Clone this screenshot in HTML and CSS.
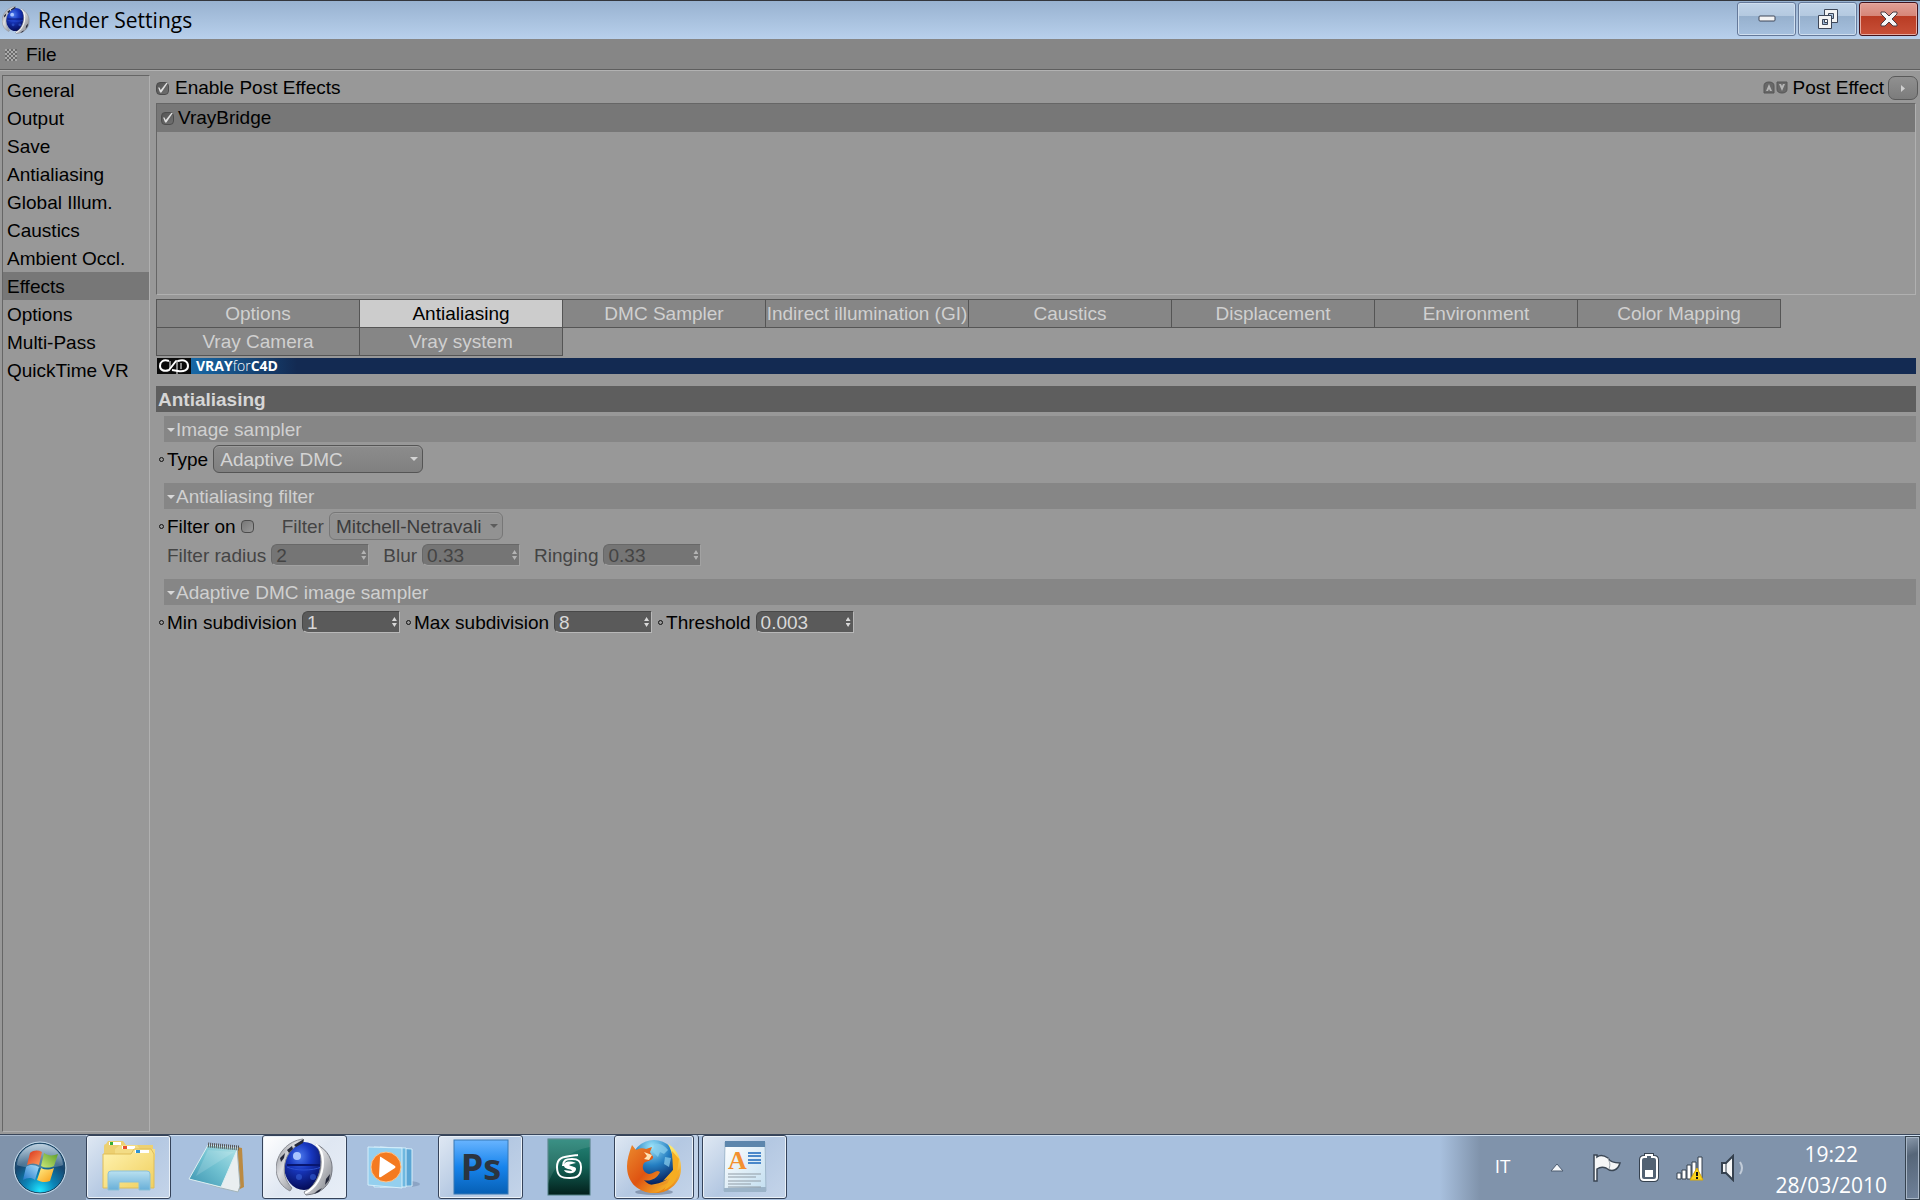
FILE: index.html
```html
<!DOCTYPE html>
<html lang="en">
<head>
    <meta charset="UTF-8">
    <meta name="viewport" content="width=device-width, initial-scale=1.0">
    <title>Render Settings</title>
    <link rel="stylesheet" href="styles.css">
</head>
<body>
    <!-- Shared gradients and shapes -->
    <svg class="defs" width="0" height="0" aria-hidden="true">
        <defs>
            <radialGradient id="ball" cx="40%" cy="30%" r="70%">
                <stop offset="0" stop-color="#4a78ec"/>
                <stop offset=".4" stop-color="#1838c0"/>
                <stop offset="1" stop-color="#040c58"/>
            </radialGradient>
            <linearGradient id="silver" x1="0" y1="0" x2="1" y2="1">
                <stop offset="0" stop-color="#7c7f86"/>
                <stop offset=".4" stop-color="#dcdde0"/>
                <stop offset="1" stop-color="#75787f"/>
            </linearGradient>
            <symbol id="c4d" viewBox="0 0 58 58">
                <ellipse cx="28" cy="28" rx="20" ry="24" fill="url(#ball)"/>
                <path d="M11 27H45" stroke="#081670" stroke-width="2"/>
                <path d="M11 29C19 33 37 33 45 29" fill="none" stroke="#2c50d0" stroke-width="1"/>
                <circle cx="21" cy="18" r="4" fill="#a9c4ff"/>
                <circle cx="23" cy="39" r="3" fill="#3560d8" opacity=".6"/>
                <circle cx="37" cy="39" r="3" fill="#3560d8" opacity=".6"/>
                <path d="M27 1C12 3 0 15 0 32C1 42 6 49 14 53L16 50C9 43 7 34 9 25C11 16 16 9 27 4Z" fill="url(#silver)" stroke="#8a8d94"/>
                <path d="M18 7L28 1L27 5L20 9Z M11 12L16 8L17 11L13 15Z M4 20L9 15L8 20L5 24Z" fill="#24283a"/>
                <path d="M40 6C52 12 57 22 56 33C55 46 46 56 30 57L28 54C42 48 51 24 40 6Z" fill="url(#silver)" stroke="#777a82"/>
                <path d="M29 55C40 50 47 38 47 24C47 17 44 10 40 6" fill="none" stroke="#fff" stroke-width="2"/>
                <path d="M50 41L54 36L53 42L49 47Z M41 53L46 50L43 54L38 56Z" fill="#24283a"/>
            </symbol>
        </defs>
    </svg>

    <header class="titlebar">
        <svg class="app-icon" viewBox="0 0 58 58"><use href="#c4d"/></svg>
        <h1>Render Settings</h1>
        <div class="window-buttons">
            <button class="win-btn" aria-label="Minimize">
                <svg width="18" height="8"><rect x="1" y="1" width="16" height="5" rx="1" fill="#f4f4f4" stroke="#3e4758"/></svg>
            </button>
            <button class="win-btn" aria-label="Restore">
                <svg width="22" height="22" fill="#f4f4f4" stroke="#3e4758">
                    <path fill-rule="evenodd" d="M7.500 1.500H20.500V14.500H7.500Z M11.500 5.500H16.500V10.500H11.500Z"/>
                    <path fill-rule="evenodd" d="M1.500 7.500H14.500V20.500H1.500Z M5.500 11.500H10.500V16.500H5.500Z"/>
                </svg>
            </button>
            <button class="win-btn close" aria-label="Close">
                <svg width="20" height="18"><path d="M2 2H6L10 6L14 2H18V4L13 9L18 14V16H14L10 12L6 16H2V14L7 9L2 4Z" fill="#f6f6f6" stroke="#4a3c44"/></svg>
            </button>
        </div>
    </header>

    <nav class="menubar">
        <span class="grip"></span>
        <button class="menu">File</button>
    </nav>

    <div class="workspace">
        <nav class="sidebar">
            <button>General</button>
            <button>Output</button>
            <button>Save</button>
            <button>Antialiasing</button>
            <button>Global Illum.</button>
            <button>Caustics</button>
            <button>Ambient Occl.</button>
            <button class="active">Effects</button>
            <button>Options</button>
            <button>Multi-Pass</button>
            <button>QuickTime VR</button>
        </nav>

        <main class="content">
            <div class="toolbar">
                <label class="check"><input type="checkbox" checked>Enable Post Effects</label>
                <div class="post-effect">
                    <svg width="25" height="14" viewBox="0 0 25 14">
                        <path d="M1 12V5Q1 1 6 1Q11 1 11 5V12Z" fill="#686868" stroke="#565656"/>
                        <path d="M6 3L9 10H7L6 8L5 10H3Z" fill="#b4b4b4"/>
                        <path d="M14 1V8Q14 12 19 12Q24 12 24 8V1Z" fill="#686868" stroke="#565656"/>
                        <path d="M19 10L16 3H18L19 5L20 3H22Z" fill="#b4b4b4"/>
                    </svg>
                    <span>Post Effect</span>
                    <button class="popup" aria-label="Post effect menu">
                        <svg width="4" height="7"><path d="M0 0L4 3.500L0 7Z" fill="#d0d0d0"/></svg>
                    </button>
                </div>
            </div>

            <div class="effect-list">
                <label class="check selected"><input type="checkbox" checked>VrayBridge</label>
            </div>

            <div class="tabs">
                <button>Options</button>
                <button class="active">Antialiasing</button>
                <button>DMC Sampler</button>
                <button>Indirect illumination (GI)</button>
                <button>Caustics</button>
                <button>Displacement</button>
                <button>Environment</button>
                <button>Color Mapping</button>
                <button>Vray Camera</button>
                <button>Vray system</button>
            </div>

            <div class="banner">
                <svg width="34" height="16" viewBox="0 0 34 16">
                    <rect width="34" height="16" fill="#0b0b0b"/>
                    <g fill="none" stroke="#fff" stroke-width="2">
                        <path d="M12 3C6 1 3 4 3 8C3 12 7 14 12 12L19 3"/>
                        <path d="M21 3C28 1 31 4 31 8C31 12 27 14 21 13L15 12"/>
                        <path d="M13 3V11M20 2V16M18 3H22M24 5V11" stroke-width="1"/>
                    </g>
                </svg>
                <span class="brand"><b>VRAY</b>for<b>C4D</b></span>
            </div>

            <h2>Antialiasing</h2>

            <section class="group">
                <h3>Image sampler</h3>
                <div class="row">
                    <i class="dot"></i>
                    <label for="type">Type</label>
                    <span class="select"><select id="type" class="type-select"><option>Adaptive DMC</option></select></span>
                </div>
            </section>

            <section class="group">
                <h3>Antialiasing filter</h3>
                <div class="row">
                    <i class="dot"></i>
                    <label for="filter-on">Filter on</label>
                    <input type="checkbox" id="filter-on">
                    <label for="filter" class="off next">Filter</label>
                    <span class="select off"><select id="filter" class="filter-select" disabled><option>Mitchell-Netravali</option></select></span>
                </div>
                <div class="row off">
                    <i class="dot"></i>
                    <label for="radius">Filter radius</label>
                    <span class="number"><input type="text" id="radius" value="2" disabled></span>
                    <i class="dot"></i>
                    <label for="blur">Blur</label>
                    <span class="number"><input type="text" id="blur" value="0.33" disabled></span>
                    <i class="dot"></i>
                    <label for="ringing">Ringing</label>
                    <span class="number"><input type="text" id="ringing" value="0.33" disabled></span>
                </div>
            </section>

            <section class="group">
                <h3>Adaptive DMC image sampler</h3>
                <div class="row">
                    <i class="dot"></i>
                    <label for="min">Min subdivision</label>
                    <span class="number"><input type="text" id="min" value="1"></span>
                    <i class="dot"></i>
                    <label for="max">Max subdivision</label>
                    <span class="number"><input type="text" id="max" value="8"></span>
                    <i class="dot"></i>
                    <label for="threshold">Threshold</label>
                    <span class="number"><input type="text" id="threshold" value="0.003"></span>
                </div>
            </section>
        </main>
    </div>

    <footer class="taskbar">
        <div class="start-area">
            <button class="start" aria-label="Start">
                <svg width="54" height="54" viewBox="0 0 54 54">
                    <defs>
                        <radialGradient id="orb" cx="50%" cy="95%" r="85%">
                            <stop offset="0" stop-color="#20e4ff"/>
                            <stop offset=".35" stop-color="#0b85b8"/>
                            <stop offset=".75" stop-color="#17466f"/>
                            <stop offset="1" stop-color="#3c6a90"/>
                        </radialGradient>
                        <linearGradient id="gloss" x1="0" y1="0" x2="0" y2="1">
                            <stop offset="0" stop-color="#dbe8f1" stop-opacity=".8"/>
                            <stop offset="1" stop-color="#a5bccb" stop-opacity=".3"/>
                        </linearGradient>
                        <linearGradient id="red" x1="0" y1="0" x2="1" y2="1"><stop offset="0" stop-color="#d8321a"/><stop offset="1" stop-color="#ffa060"/></linearGradient>
                        <linearGradient id="green" x1="1" y1="0" x2="0" y2="1"><stop offset="0" stop-color="#5a9c28"/><stop offset="1" stop-color="#cbe878"/></linearGradient>
                        <linearGradient id="blue" x1="0" y1="1" x2="1" y2="0"><stop offset="0" stop-color="#2378c8"/><stop offset="1" stop-color="#a5dcfa"/></linearGradient>
                        <linearGradient id="yellow" x1="1" y1="1" x2="0" y2="0"><stop offset="0" stop-color="#f89c14"/><stop offset="1" stop-color="#ffee88"/></linearGradient>
                    </defs>
                    <circle cx="27" cy="27" r="25" fill="url(#orb)" stroke="#15405e" stroke-width="1"/>
                    <circle cx="27" cy="27" r="26" fill="none" stroke="#c5dced" stroke-width="1"/>
                    <path d="M4 24C5 11 15 3 27 3S49 11 50 24C42 28 12 28 4 24Z" fill="url(#gloss)"/>
                    <path d="M17 12C21 9 25 9 29 11L26 24C22 22 18 22 14 24Z" fill="url(#red)"/>
                    <path d="M31 12C35 15 40 15 45 13L41 25C37 27 32 27 28 25Z" fill="url(#green)"/>
                    <path d="M13 26C17 23 22 24 26 26L22 39C18 36 14 37 10 39Z" fill="url(#blue)"/>
                    <path d="M28 27C32 29 36 29 41 27L37 40C32 42 28 41 24 39Z" fill="url(#yellow)"/>
                </svg>
            </button>
        </div>

        <div class="tasks">
            <button class="task open" aria-label="Explorer">
                <svg width="56" height="54" viewBox="0 0 56 54">
                    <defs>
                        <linearGradient id="folder" x1="0" y1="0" x2="1" y2="1"><stop offset="0" stop-color="#fff3b0"/><stop offset="1" stop-color="#f0cf5e"/></linearGradient>
                        <linearGradient id="stand" x1="0" y1="0" x2="0" y2="1"><stop offset="0" stop-color="#b9e0f0"/><stop offset="1" stop-color="#68afd8"/></linearGradient>
                    </defs>
                    <path d="M3 6Q3 4 5 4L7 1H22L25 5H52V18H3Z" fill="#edd071"/>
                    <path d="M8 2H20V5H8Z" fill="#fff"/><path d="M9 2H12V5H9Z" fill="#35ad35"/>
                    <path d="M14 9L19 5H36L39 9H54V20H14Z" fill="#f3dc85"/>
                    <path d="M21 6H34V9H21Z" fill="#fff"/><path d="M22 6H26V9H22Z" fill="#e85030"/>
                    <path d="M2 14H30L33 9H50L53 14V48H2Z" fill="url(#folder)" stroke="#dfbd58"/>
                    <path d="M34 10H48V13H34Z" fill="#fff"/><path d="M35 10H39V13H35Z" fill="#2f92d2"/>
                    <path d="M7 50V34Q7 31 10 31H46Q49 31 49 34V50H38V42H18V50Z" fill="url(#stand)" stroke="#8bc0d8"/>
                </svg>
            </button>
            <button class="task" aria-label="Notepad">
                <svg width="58" height="54" viewBox="0 0 58 54">
                    <defs>
                        <linearGradient id="pad" x1="1" y1="0" x2="0" y2="1"><stop offset="0" stop-color="#b5e6ea"/><stop offset=".5" stop-color="#6fc0d0"/><stop offset="1" stop-color="#3c93b0"/></linearGradient>
                    </defs>
                    <path d="M49 7L54 8L56 47L48 51Z" fill="#bb8a42"/>
                    <path d="M49 7L52 46L50 52L33 48L22 45Z" fill="#e9eef0" stroke="#a3b4ba"/>
                    <path d="M20 5L50 8L33 47L1 39Z" fill="url(#pad)" stroke="#dff0f2"/>
                    <path d="M20 5L51 8" stroke="#555" stroke-width="5" stroke-dasharray="1 1"/>
                    <path d="M20 10L46 12L8 36Z" fill="#fff" opacity=".15"/>
                </svg>
            </button>
            <button class="task open current" aria-label="Cinema 4D">
                <svg width="58" height="58" viewBox="0 0 58 58"><use href="#c4d"/></svg>
            </button>
            <button class="task" aria-label="Media Player">
                <svg width="54" height="46" viewBox="0 0 54 46">
                    <ellipse cx="42" cy="40" rx="12" ry="3" fill="#7088aa" opacity=".5"/>
                    <path d="M14 3L46 5V42L14 43Z" fill="#5aa5d4" stroke="#d5eefb"/>
                    <path d="M8 3L40 4V43L8 43Z" fill="#6eb8e0" stroke="#d5eefb"/>
                    <path d="M2 3L36 4V44L2 41Z" fill="#94cfee" stroke="#d5eefb"/>
                    <circle cx="20" cy="23" r="15" fill="#f47a20" stroke="#ffc388"/>
                    <path d="M14 13Q13 12 15 13L29 22Q30 23 29 24L15 33Q13 34 13 32Z" fill="#fff"/>
                </svg>
            </button>
            <button class="task open" aria-label="Photoshop">
                <svg width="56" height="56" viewBox="0 0 56 56">
                    <defs><linearGradient id="ps" x1="0" y1="0" x2="0" y2="1"><stop offset="0" stop-color="#68b4ff"/><stop offset=".5" stop-color="#1784ec"/><stop offset="1" stop-color="#065fb4"/></linearGradient></defs>
                    <rect x="1" y="1" width="54" height="54" fill="url(#ps)" stroke="#3878b4"/>
                    <text x="28" y="41" class="ps-text">Ps</text>
                </svg>
            </button>
            <button class="task" aria-label="3ds Max">
                <svg width="44" height="58" viewBox="0 0 44 58">
                    <defs><linearGradient id="max-bg" x1="0" y1="0" x2="0" y2="1"><stop offset="0" stop-color="#258578"/><stop offset=".5" stop-color="#126054"/><stop offset="1" stop-color="#031f1b"/></linearGradient></defs>
                    <rect x="1" y="1" width="42" height="56" fill="url(#max-bg)" stroke="#4e7c80"/>
                    <path d="M1 46C9 23 25 12 43 9V1H1Z" fill="#fff" opacity=".1"/>
                    <path d="M31 17C15 19 10 19 10 29C10 39 15 40 23 40C31 40 34 37 34 29C34 22 30 21 25 21C18 21 16 23 16 28" fill="none" stroke="#fff" stroke-width="2"/>
                    <path d="M29 25C22 22 16 24 17 28C18 32 24 30 25 33C22 33 19 32 17 32C19 37 29 36 29 31C29 28 24 29 22 27C23 26 26 26 29 25Z" fill="#fff"/>
                </svg>
            </button>
            <div class="stack">
                <button class="task open" aria-label="Firefox">
                    <svg width="56" height="56" viewBox="0 0 56 56">
                        <defs>
                            <radialGradient id="globe" cx="45%" cy="15%" r="80%"><stop offset="0" stop-color="#9de5fb"/><stop offset=".5" stop-color="#257fc2"/><stop offset="1" stop-color="#08225f"/></radialGradient>
                            <linearGradient id="fox" x1="0" y1="0" x2="1" y2="1"><stop offset="0" stop-color="#eb8a2d"/><stop offset=".5" stop-color="#df5412"/><stop offset="1" stop-color="#f9c22c"/></linearGradient>
                            <linearGradient id="tail" x1="0" y1="0" x2="0" y2="1"><stop offset="0" stop-color="#ffee70"/><stop offset="1" stop-color="#e88010"/></linearGradient>
                        </defs>
                        <ellipse cx="28" cy="53" rx="19" ry="3" fill="#40506c" opacity=".4"/>
                        <circle cx="28" cy="24" r="23" fill="url(#globe)"/>
                        <path d="M29 5C34 4 39 7 42 11L38 15L34 13L32 18L27 13Z M39 18L45 19L43 28L38 25Z" fill="#8cd0ee" opacity=".7"/>
                        <path d="M42 5C48 8 55 17 55 28C56 43 43 55 28 54C18 53 12 49 8 43C21 49 40 45 46 35C49 27 47 14 42 5Z" fill="url(#tail)"/>
                        <path d="M46 12L53 20L51 33L54 29C52 41 45 48 38 51L44 39L37 42L47 31Z" fill="#f6ad22"/>
                        <path d="M6 6L10 11C14 9 17 9 20 10L26 8L24 13C25 16 28 17 27 19C25 22 21 22 18 24C15 29 18 34 23 35C28 35 30 30 34 33C31 40 23 43 18 41C25 49 36 48 43 43C39 51 32 54 25 54C10 52 1 42 1 27C1 21 3 14 6 6Z" fill="url(#fox)"/>
                        <path d="M18 13L26 16L23 21L18 20L21 17Z" fill="#ffe3b4"/>
                    </svg>
                </button>
            </div>
            <button class="task open" aria-label="WordPad">
                <svg width="44" height="54" viewBox="0 0 44 54">
                    <defs><linearGradient id="page" x1="0" y1="0" x2="1" y2="1"><stop offset="0" stop-color="#fff"/><stop offset="1" stop-color="#c2def0"/></linearGradient></defs>
                    <path d="M2 2H42L43 51H1Z" fill="url(#page)" stroke="#a0b8cc"/>
                    <path d="M2 1H42V7H2Z" fill="#5d86ac"/>
                    <path d="M1 48L43 47V52H1Z" fill="#9bb3c8"/>
                    <text x="5" y="29" class="word-text">A</text>
                    <path d="M25 13H38M25 16H38M25 20H38M25 23H38" stroke="#4a88ca" stroke-width="2"/>
                    <path d="M5 34H38M5 37H33M5 41H38M5 44H28M5 47H38" stroke="#909ba5"/>
                </svg>
            </button>
        </div>

        <div class="tray">
            <button class="lang">IT</button>
            <button aria-label="Show hidden icons">
                <svg width="14" height="10" viewBox="0 0 14 10"><path d="M1 8L7 1L13 8Z" fill="#f4f6f8" stroke="#4c5c70"/></svg>
            </button>
            <div class="tray-icons">
                <button aria-label="Action Center">
                    <svg width="30" height="30" viewBox="0 0 30 30"><path d="M2 2H5V4C9 1 13 3 16 5C18 9 22 10 28 10C26 17 20 20 14 15C11 14 8 14 5 16V28H2Z" fill="#f5f6f7" stroke="#3a4654" stroke-width="1.500"/><path d="M16 5C17 9 19 10 17 16" fill="none" stroke="#9ba3ac"/></svg>
                </button>
                <button aria-label="Battery">
                    <svg width="22" height="30" viewBox="0 0 22 30"><path d="M8 4V2H14V4H16Q19 4 19 7V24Q19 27 16 27H6Q3 27 3 24V7Q3 4 6 4Z" fill="none" stroke="#35414f" stroke-width="4"/><path d="M8 4V2H14V4H16Q19 4 19 7V24Q19 27 16 27H6Q3 27 3 24V7Q3 4 6 4Z" fill="#526273" stroke="#fff" stroke-width="2"/><path d="M7 17H15V24H7Z" fill="#fff"/></svg>
                </button>
                <button aria-label="Network">
                    <svg width="28" height="26" viewBox="0 0 28 26"><path d="M1 18H5V24H1Z M6 15H10V24H6Z M11 10H15V24H11Z M16 7H20V24H16Z M22 2H26V24H22Z" fill="#fff" stroke="#35414f"/><path d="M21 13L27 25H14Z" fill="#fbd31d" stroke="#d7a90a"/><path d="M21 17V21M21 22V24" stroke="#111" stroke-width="2"/></svg>
                </button>
                <button aria-label="Volume">
                    <svg width="26" height="28" viewBox="0 0 26 28"><path d="M2 9H6L13 2V26L6 19H2Z" fill="#f5f6f7" stroke="#35414f" stroke-width="2"/><path d="M6 9V19" stroke="#35414f"/><path d="M20 8Q24 14 20 20" fill="none" stroke="#c2ccd8" stroke-width="2"/></svg>
                </button>
            </div>
            <time class="clock" datetime="2010-03-28T19:22"><span>19:22</span><span>28/03/2010</span></time>
            <button class="show-desktop" aria-label="Show desktop"></button>
        </div>
    </footer>
</body>
</html>
```
FILE: styles.css
```css
* {
    margin: 0;
    padding: 0;
    box-sizing: border-box;
}

body {
    height: 100vh;
    display: flex;
    flex-direction: column;
    overflow: hidden;
    background-color: #989898;
    color: #000;
    font-family: "Liberation Sans", Arial, sans-serif;
    font-size: 19px;
    line-height: 28px;
}

button,
input,
select {
    font: inherit;
    color: inherit;
    border: none;
    background: none;
}

svg {
    display: block;
    flex-shrink: 0;
}

.defs {
    position: absolute;
}

/* Title bar */
.titlebar {
    display: flex;
    align-items: center;
    height: 39px;
    padding: 0 2px;
    gap: 8px;
    border-top: 1px solid #33363c;
    background: linear-gradient(#98b2d0, #b8d0ec);
}

.app-icon {
    width: 28px;
    height: 28px;
}

.titlebar h1 {
    flex: 1;
    font-family: "Open Sans", "Noto Sans", sans-serif;
    font-size: 21px;
    font-weight: 400;
}

.window-buttons {
    display: flex;
    align-self: flex-start;
    gap: 2px;
    padding-top: 1px;
}

.win-btn {
    width: 59px;
    height: 34px;
    display: flex;
    align-items: center;
    justify-content: center;
    border: 1px solid #65799a;
    border-radius: 3px;
    box-shadow: inset 0 0 0 1px #d0dfef;
    background: linear-gradient(#c0d3e8, #b4c9e0 40%, #96b0cd 41%, #a6c0de);
}

.win-btn.close {
    border-color: #43131c;
    box-shadow: inset 0 0 0 1px #e6aaa0;
    background: linear-gradient(#e2a096, #d68678 40%, #b93c24 41%, #c85038);
}

/* Menu bar */
.menubar {
    display: flex;
    align-items: center;
    height: 32px;
    padding-left: 5px;
    gap: 9px;
    background-color: #868686;
    border-bottom: 1px solid #b2b2b2;
    box-shadow: inset 0 -1px #5e5e5e;
}

.grip {
    width: 12px;
    height: 12px;
    background: repeating-conic-gradient(#6a6a6a 0 25%, #aaa 0 50%) 0 0 / 4px 4px;
}

/* Body of the window */
.workspace {
    flex: 1;
    display: flex;
    gap: 6px;
    min-height: 0;
    padding: 4px 2px 2px;
}

.sidebar {
    width: 148px;
    display: flex;
    flex-direction: column;
    flex-shrink: 0;
    border: 1px solid #666;
    border-right-color: #b0b0b0;
    border-bottom-color: #b0b0b0;

    button {
        height: 28px;
        padding: 2px 0 0 4px;
        line-height: 26px;
        text-align: left;
    }

    .active {
        background-color: #777;
    }
}

.content {
    flex: 1;
    min-width: 0;
}

.toolbar {
    display: flex;
    align-items: center;
    justify-content: space-between;
    height: 28px;
    padding-bottom: 2px;
}

.check {
    display: flex;
    align-items: center;
    gap: 6px;
}

input[type="checkbox"] {
    appearance: none;
    flex-shrink: 0;
    width: 13px;
    height: 13px;
    border: 1px solid #4c4c4c;
    border-radius: 4px;
    background: linear-gradient(135deg, #777, #999);
}

input[type="checkbox"]:checked {
    background: linear-gradient(135deg, #555, #707070);
}

input[type="checkbox"]:checked::after {
    content: "";
    display: block;
    height: 11px;
    background-color: #e0e0e0;
    clip-path: polygon(10% 45%, 22% 45%, 34% 68%, 84% 5%, 98% 5%, 40% 92%, 28% 92%);
}

.post-effect {
    display: flex;
    align-items: center;
    gap: 4px;
}

.popup {
    width: 30px;
    height: 24px;
    display: flex;
    align-items: center;
    justify-content: center;
    border: 1px solid #5a5a5a;
    border-radius: 7px;
    background: linear-gradient(#909090, #7c7c7c);
}

.effect-list {
    height: 192px;
    margin-right: 2px;
    border: 1px solid #666;
    border-right-color: #b0b0b0;
    border-bottom-color: #b0b0b0;
}

.selected {
    height: 28px;
    padding-left: 4px;
    gap: 4px;
    background-color: #777;
}

/* Tabs wrap to a new line when the window is full */
.tabs {
    display: flex;
    flex-wrap: wrap;
    padding: 4px 0 0 1px;
    color: #d0d0d0;

    button {
        width: 204px;
        height: 29px;
        margin: 0 0 -1px -1px;
        border: 1px solid #555;
        background-color: #868686;
        white-space: nowrap;
    }

    .active {
        background-color: #ccc;
        color: #000;
    }
}

.banner {
    display: flex;
    align-items: center;
    height: 16px;
    gap: 5px;
    margin: 3px 2px 12px 1px;
    background: linear-gradient(90deg, #1768a6 34px, #132a52 140px);
}

.brand {
    color: #fff;
    font-family: "Open Sans", "Noto Sans", sans-serif;
    font-size: 14px;
    font-weight: 300;
    line-height: 16px;

    b {
        font-weight: 700;
    }
}

h2 {
    height: 26px;
    margin-right: 2px;
    padding-left: 2px;
    background-color: #5e5e5e;
    color: #d6d6d6;
    font-size: 19px;
    line-height: 27px;
}

/* Setting groups */
.group {
    margin: 4px 2px 10px 0;
}

.group + .group {
    margin-top: 0;
}

.group h3 {
    display: flex;
    align-items: center;
    height: 26px;
    margin: 0 0 3px 8px;
    padding: 2px 0 0 3px;
    gap: 1px;
    background-color: #868686;
    color: #d0d0d0;
    font-size: 19px;
    font-weight: 400;
}

.group h3::before {
    content: "";
    border: 4px solid transparent;
    border-top-color: #d8d8d8;
    border-bottom-width: 0;
}

.row {
    display: flex;
    align-items: center;
    height: 28px;
    padding-left: 3px;
}

.row + .row {
    margin-top: 1px;
}

.row > label {
    margin: 0 5px 0 3px;
    padding-top: 2px;
}

.row > .next {
    margin-left: 28px;
}

.off {
    color: #444;
}

.dot {
    width: 5px;
    height: 5px;
    border: 1px solid #111;
    border-radius: 50%;
}

.off .dot {
    visibility: hidden;
}

.select {
    position: relative;
}

.select select {
    display: block;
    appearance: none;
    height: 28px;
    padding: 0 0 3px 6px;
    border: 1px solid #555;
    border-radius: 6px;
    background: linear-gradient(#8c8c8c, #808080);
    box-shadow: inset 0 1px #9c9c9c;
    color: #d4d4d4;
}

.select::after {
    content: "";
    position: absolute;
    right: 5px;
    top: 12px;
    border: 4px solid transparent;
    border-top-color: #d4d4d4;
    border-bottom-width: 0;
}

.select.off select {
    border-color: #777;
    background: #929292;
    color: #3c3c3c;
    opacity: 1;
}

.select.off::after {
    border-top-color: #5c5c5c;
}

.select .type-select {
    width: 210px;
}

.select .filter-select {
    width: 174px;
}

.number {
    display: flex;
    align-items: center;
    width: 98px;
    height: 22px;
    margin-right: 6px;
    padding: 0 2px 0 4px;
    border: 1px solid #484848;
    border-right-color: #b8b8b8;
    border-bottom-color: #b8b8b8;
    border-radius: 6px 0 0 6px;
    background-color: #5a5a5a;
    color: #d8d8d8;
}

.number input {
    flex: 1;
    min-width: 0;
    height: 20px;
    padding-top: 1px;
}

/* Up and down arrows of the number fields */
.number::after {
    content: "";
    width: 5px;
    height: 10px;
    background-color: #d8d8d8;
    clip-path: polygon(50% 0, 100% 40%, 0 40%, 0 60%, 100% 60%, 50% 100%, 0 60%, 0 40%);
}

.off .number {
    border-color: #686868 #a2a2a2 #a2a2a2 #686868;
    background-color: #757575;
    color: #444;
}

.off .number::after {
    background-color: #b4b4b4;
}

/* Taskbar */
.taskbar {
    display: flex;
    height: 66px;
    border-top: 1px solid #39465a;
    box-shadow: inset 0 1px #cfdff0;
    background-color: #a8c0de;
}

.taskbar button {
    display: flex;
    align-items: center;
    justify-content: center;
}

.start-area {
    width: 86px;
    display: flex;
    align-items: center;
    padding-left: 13px;
    border-top: 1px solid #a8b8cc;
    background-color: #8093ab;
}

.tasks {
    flex: 1;
    display: flex;
    gap: 3px;
}

.task {
    width: 85px;
    height: 64px;
}

.task.open {
    border: 1px solid #35435a;
    border-radius: 3px;
    box-shadow: inset 0 0 0 1px #eaf1f8;
    background: linear-gradient(135deg, #dfe8f3, #b4c8e2 50%, #c4d4e9);
}

.task.current {
    background: linear-gradient(135deg, #fff, #dfe7f2 50%, #e8eef7);
}

.stack {
    width: 85px;
    height: 64px;
    border-right: 1px solid #35435a;
    border-radius: 3px;
    background-color: #c0d2e8;

    .task {
        width: 80px;
    }
}

.ps-text {
    fill: #2b3440;
    font-family: "Open Sans", sans-serif;
    font-size: 36px;
    font-weight: 700;
    text-anchor: middle;
}

.word-text {
    fill: #f39030;
    font-family: "Liberation Serif", serif;
    font-size: 26px;
    font-weight: 700;
}

.tray {
    display: flex;
    align-items: center;
    padding-left: 55px;
    border-top: 1px solid #cfdff0;
    background: linear-gradient(90deg, #a8c0de, #8093ab 40px);
    color: #fff;
    font-family: "Open Sans", "Noto Sans", sans-serif;
    font-size: 21px;
}

.tray .lang {
    margin-right: 39px;
    padding-bottom: 4px;
    font-size: 19px;
}

.tray-icons {
    display: flex;
    align-items: center;
    gap: 16px;
    margin: 0 30px 0 28px;
}

.clock {
    display: flex;
    flex-direction: column;
    align-items: center;
    margin-right: 18px;
    padding-top: 4px;
    line-height: 31px;
}

.tray .show-desktop {
    width: 15px;
    height: 64px;
    border: 1px solid #35424f;
    box-shadow: inset 0 0 0 1px #a8b6c6;
    background: linear-gradient(160deg, #8c9bad, #566679 30%, #70829a);
}
```
